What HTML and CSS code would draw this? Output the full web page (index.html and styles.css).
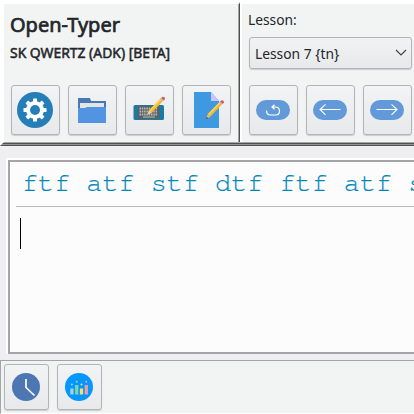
FILE: index.html
```html
<!DOCTYPE html>
<html lang="en">
<head>
<meta charset="utf-8">
<title>Open-Typer</title>
<link rel="stylesheet" href="styles.css">
</head>
<body>
<div class="app">
  <header class="top">
    <section class="brand">
      <h1>Open-Typer</h1>
      <h2>SK QWERTZ (ADK) [BETA]</h2>
      <div class="tools">
        <button class="btn" aria-label="Settings"><svg width="36" height="36" viewBox="0 0 36 36"><circle cx="18" cy="18" r="18" fill="#267eb8"/><g fill="#fff"><circle cx="18" cy="18" r="9"/><rect x="16" y="6.500" width="4" height="23" rx=".5"/><rect x="6.500" y="16" width="23" height="4" rx=".5"/><g transform="rotate(45 18 18)"><rect x="16" y="6.500" width="4" height="23" rx=".5"/><rect x="6.500" y="16" width="23" height="4" rx=".5"/></g></g><circle cx="18" cy="18" r="5" fill="#267eb8"/></svg></button>
        <button class="btn" aria-label="Open"><svg width="36" height="36" viewBox="0 0 36 36"><path d="M4 6h12l1 3h15v8H4z" fill="#4877b5"/><path d="M6 11h24v7H6z" fill="#e4e4e2"/><path d="M4 16h7l2-1h19v16H4z" fill="#5294e2"/></svg></button>
        <button class="btn" aria-label="Keyboard"><svg width="36" height="36" viewBox="0 0 36 36"><rect x="2.500" y="13" width="30.500" height="15" rx="1.500" fill="#1c7ba3"/><rect x="6.500" y="14" width="22" height="13" rx="2" fill="#5b6163"/><path d="M8.500 16.500h18M8.500 19.500h18M8.500 22.500h18" stroke="#b5babc" stroke-width="2" stroke-dasharray="1.500 .8"/><path d="M12 25h12" stroke="#bbb" stroke-width="1"/><path d="M16.500 22.500l1.500-4L30 6l2.500 2.500L20.500 21z" fill="#f7b931"/><path d="M18 18.500L30 6l1 1-12 12.500z" fill="#ffd35b"/><path d="M16.500 22.500l1.500-4 2.500 2.500z" fill="#efcf9a"/><path d="M29 7l2.500 2.500 1-1L30 6z" fill="#b9c5cb"/><path d="M30 6l1.500-1.200q2.800-.2 2.500 2.500L32.500 8.500z" fill="#d95d65"/></svg></button>
        <button class="btn" aria-label="Text file"><svg width="36" height="36" viewBox="0 0 36 36" overflow="visible"><path d="M6 0h17l8 9v27H6z" fill="#3e99e1"/><path d="M23 0l8 9h-8z" fill="#c8c6fa"/><path d="M18 27l2-5L32 9.500l2.500 2.500L22.500 24.500z" fill="#f7b931"/><path d="M20 22L32 9.500l1 1L21 23z" fill="#ffd35b"/><path d="M18 27l2-5 2.500 2.500z" fill="#d9b77d"/><path d="M18 27l.8-2 1.200 1.200z" fill="#222"/><path d="M31 10.500l2.500 2.500 1-1L32 9.500z" fill="#b9c5cb"/><path d="M32 9.500l1.500-1.300q2.800-.2 2.500 2.500L34.500 12z" fill="#d95d65"/></svg></button>
      </div>
    </section>
    <section class="lesson">
      <div class="label">Lesson:</div>
      <div class="select"><span>Lesson 7 {tn}</span><svg width="12" height="8" viewBox="0 0 12 8"><path d="M1 1l5 5 5-5" fill="none" stroke="#3c4144" stroke-width="1.100"/></svg></div>
      <div class="tools">
        <button class="btn" aria-label="Repeat"><svg width="34" height="20" viewBox="0 0 34 20"><rect width="34" height="20" rx="10" fill="#6299d9"/><path d="M10.500 10.500q0 4.500 4 4.500h5q4 0 4-4t-4-4h-3.500M18.500 4.800L16 7l2.500 2.200" fill="none" stroke="#fff" stroke-width="1.200"/></svg></button>
        <button class="btn" aria-label="Previous"><svg width="34" height="20" viewBox="0 0 34 20"><rect width="34" height="20" rx="10" fill="#6299d9"/><path d="M27.500 9.500H7M12.500 4.300L7 9.500l5.500 5.300" fill="none" stroke="#fff" stroke-width="1.100"/></svg></button>
        <button class="btn" aria-label="Next"><svg width="34" height="20" viewBox="0 0 34 20"><rect width="34" height="20" rx="10" fill="#6299d9"/><path d="M6.500 9.500H27M21.500 4.300L27 9.500l-5.500 5.300" fill="none" stroke="#fff" stroke-width="1.100"/></svg></button>
      </div>
    </section>
  </header>
  <div class="rule"></div>
  <main class="editor">
    <div class="paper">
      <div class="sample">ftf atf stf dtf ftf atf stf</div>
      <div class="input"><div class="caret"></div></div>
    </div>
  </main>
  <footer class="bottom">
    <button class="btn small" aria-label="Timer"><svg width="28" height="28" viewBox="0 0 28 28"><circle cx="14" cy="14" r="14" fill="#4c77b3"/><path d="M14 6v8.500l8.500 8" fill="none" stroke="#fff" stroke-width="1.700"/></svg></button>
    <button class="btn small" aria-label="Statistics"><svg width="28" height="28" viewBox="0 0 28 28"><circle cx="14" cy="14" r="14" fill="#0497ff"/><path d="M5.300 15.500h3.200v6H5.300z" fill="#a8d0f5"/><path d="M10.100 12h3.200v9.500h-3.200z" fill="#84d69c"/><path d="M14.900 15.500h3.200v6h-3.200z" fill="#f7e16a"/><path d="M19.700 12h3.200v9.500h-3.200z" fill="#f29ca5"/><circle cx="6.900" cy="11.500" r="1" fill="#a8d0f5"/><circle cx="11.700" cy="8.800" r="1" fill="#84d69c"/><circle cx="16.500" cy="11.500" r="1" fill="#f7e16a"/><circle cx="21.300" cy="8.800" r="1" fill="#f29ca5"/></svg></button>
  </footer>
</div>
</body>
</html>
```
FILE: styles.css
```css
* { box-sizing: border-box; }
body { margin: 0; background: #fff; color: #232629; font-family: "Noto Sans", sans-serif; overflow: hidden; }
.app { width: 414px; height: 414px; display: flex; flex-direction: column; overflow: hidden; }
.top { height: 142px; display: flex; padding-left: 4px; }
.brand { width: 236px; margin-top: 2px; border-top: 2px solid #fff; border-right: 1px solid #4f4f4f; background: #f2f4f4; box-shadow: inset -1px 0 #a5a5a5; padding: 6px 0 0 6px; }
.lesson { flex: none; width: 172px; margin: 4px 0 0 2px; background: #f2f4f4; padding: 6px 0 0 7px; }
h1 { margin: 0; font-size: 20px; line-height: 29px; font-weight: 400; -webkit-text-stroke: .7px #232629; white-space: nowrap; }
h2 { margin: 4px 0 0; font-size: 13.900px; line-height: 20px; font-weight: 400; -webkit-text-stroke: .5px #232629; white-space: nowrap; }
.tools { display: flex; gap: 8px; margin-top: 22px; margin-left: 1px; }
.btn { flex: none; width: 49px; height: 50px; padding: 0 1px 0 0; display: flex; align-items: center; justify-content: center; border: 1px solid #b2b4b5; border-radius: 3px; background: linear-gradient(#f2f3f4, #e8e9eb); box-shadow: 0 1px 1px #c9cbcc; }
.label { margin-left: -1px; font-size: 13.800px; line-height: 20px; }
.select { width: 163px; height: 32px; margin-top: 7px; padding: 0 4px 0 5px; display: flex; align-items: center; justify-content: space-between; border: 1px solid #b2b4b5; border-radius: 3px; background: linear-gradient(#f1f2f3, #e8e9eb); box-shadow: 0 1px 1px #c9cbcc; font-size: 13.800px; }
.lesson .tools { margin: 16px 0 0; }
.rule { height: 4px; flex: none; background: linear-gradient(#a5a5a5 1px, #505052 1px 2px, #949494 2px 3px, #505052 3px); clip-path: polygon(4px 0, 100% 0, 100% 100%, 0 100%); }
.editor { height: 214px; flex: none; background: #efeff1; padding: 12px 0 0 6px; }
.paper { width: 420px; height: 194px; border: 2px solid #a5a5a5; margin: 2px 0 0 2px; background: #fcfcfc; padding: 0 6px; box-shadow: 0 0 0 2px #fff; clip-path: inset(-2px 0 0 -2px); }
.sample { height: 45px; border-bottom: 1px solid #b9b9b9; padding: 5px 0 0 6px; font: 26.667px/32px "Courier 10 Pitch", "Nimbus Mono PS", FreeMono, "Liberation Mono", monospace; letter-spacing: .1px; color: #0086b9; -webkit-text-stroke: .2px #0086b9; white-space: nowrap; }
.input { padding: 11px 4px; }
.caret { width: 1px; height: 31px; background: #000; }
.bottom { height: 54px; flex: none; display: flex; gap: 8px; padding: 3px 0 0 3px; background: #f2f4f4; border-top: 1px solid #a5a5a5; border-left: 1px solid #a5a5a5; border-bottom: 1px solid #fff; }
.small { width: 45px; height: 46px; }
```
